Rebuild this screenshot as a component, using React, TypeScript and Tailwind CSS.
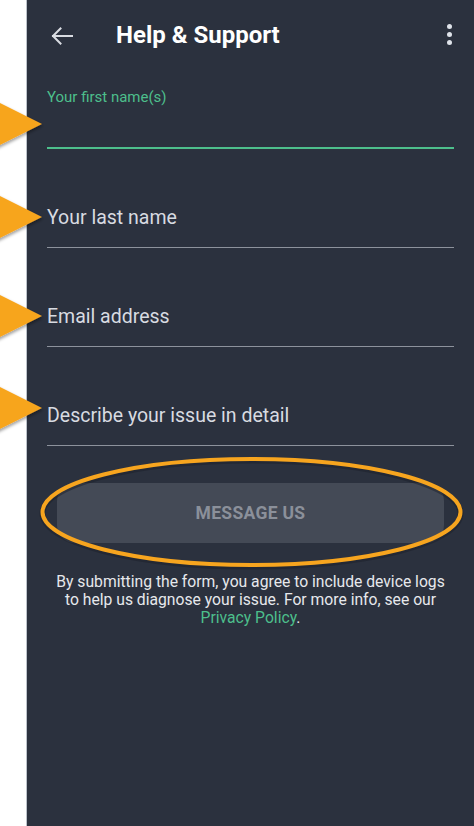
import React from "react";

const fields = ["Your last name", "Email address", "Describe your issue in detail"];
const arrowTips = [124, 217, 316, 408];

function Pointer({ tip }: { tip: number }) {
  return (
    <svg
      className="absolute left-0 pointer-events-none"
      style={{ top: tip - 26 }}
      width="52"
      height="56"
      viewBox="0 0 52 56"
    >
      <defs>
        <filter id={`sh${tip}`} x="-20%" y="-20%" width="150%" height="150%">
          <feDropShadow dx="1" dy="2" stdDeviation="1.5" floodColor="#000" floodOpacity="0.35" />
        </filter>
      </defs>
      <polygon points="-4,3 42,26 -4,49" fill="#f7a51f" filter={`url(#sh${tip})`} />
    </svg>
  );
}

export default function App() {
  return (
    <div
      className="relative flex w-[474px] h-[826px] overflow-hidden"
      style={{ fontFamily: "Roboto, 'Liberation Sans', sans-serif" }}
    >
      <div className="w-[27px] shrink-0 bg-white border-r border-[#bcc2ca]" />

      <div className="flex-1 flex flex-col bg-[#2b313e]">
        {/* App bar */}
        <header className="h-[70px] flex items-center pl-[24px] pr-[22px]">
          <svg width="22" height="18" viewBox="0 0 22 18" className="mt-[2px]" fill="none" stroke="#d9dce2" strokeWidth="2" strokeLinecap="square">
            <path d="M2 9h19M9.5 1.5 2 9l7.5 7.5" />
          </svg>
          <h1 className="ml-[43px] text-[24px] leading-none font-bold text-white">Help &amp; Support</h1>
          <div className="ml-auto flex flex-col gap-[3px] items-center mt-[-1px]">
            <span className="w-[5px] h-[5px] rounded-full bg-[#dfe3ea]" />
            <span className="w-[5px] h-[5px] rounded-full bg-[#dfe3ea]" />
            <span className="w-[5px] h-[5px] rounded-full bg-[#dfe3ea]" />
          </div>
        </header>

        {/* Form */}
        <div className="px-[20px] flex flex-col">
          <div className="h-[79px] pt-[18px] border-b-2 border-[#4dbf8c]">
            <label className="block text-[15px] leading-[18px] text-[#4dbf8c]">Your first name(s)</label>
          </div>
          {fields.map((f) => (
            <div key={f} className="h-[99px] pt-[56px] border-b border-[#8d929c]">
              <span className="block text-[19.5px] leading-[25px] text-[#d8dbe1]">{f}</span>
            </div>
          ))}
        </div>

        {/* Submit */}
        <div className="relative mt-[37px] mx-[30px]">
          <button className="w-full h-[60px] rounded-[18px] bg-[#444a56] text-[17.5px] font-bold tracking-[0.3px] text-[#8b909a]">
            MESSAGE US
          </button>
          <svg
            className="absolute pointer-events-none"
            style={{ left: -18, top: -28, width: 425, height: 115 }}
            viewBox="0 0 425 115"
            fill="none"
          >
            <ellipse cx="212.5" cy="58.5" rx="209" ry="53" stroke="#1c2029" strokeOpacity="0.5" strokeWidth="6" />
            <ellipse cx="212.5" cy="57" rx="209" ry="53" stroke="#f7a51f" strokeWidth="4" />
          </svg>
        </div>

        <p className="mt-[30px] text-center text-[15.7px] leading-[18px] text-[#e6e8ec]">
          By submitting the form, you agree to include device logs
          <br />
          to help us diagnose your issue. For more info, see our
          <br />
          <span className="text-[#4dbf8c]">Privacy Policy</span>.
        </p>
      </div>

      {arrowTips.map((t) => (
        <Pointer key={t} tip={t} />
      ))}
    </div>
  );
}
